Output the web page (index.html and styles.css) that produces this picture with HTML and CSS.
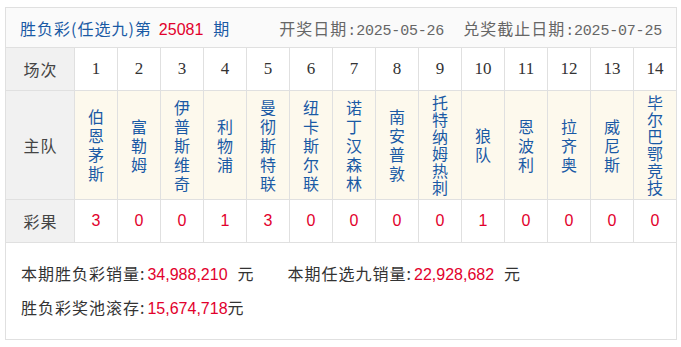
FILE: index.html
```html
<!DOCTYPE html>
<html lang="zh-CN">
<head>
<meta charset="utf-8">
<title>胜负彩(任选九)</title>
<link rel="stylesheet" href="styles.css">
</head>
<body>
<div class="panel">
  <div class="head">
    <div class="title">胜负彩(任选九)第<span class="issue">25081</span>期</div>
    <div class="dates">
      <span>开奖日期<span class="mono">:2025-05-26</span></span>
      <span>兑奖截止日期<span class="mono">:2025-07-25</span></span>
    </div>
  </div>
  <div class="grid">
    <div class="lab">场次</div>
    <div class="no">1</div><div class="no">2</div><div class="no">3</div><div class="no">4</div><div class="no">5</div><div class="no">6</div><div class="no">7</div><div class="no">8</div><div class="no">9</div><div class="no">10</div><div class="no">11</div><div class="no">12</div><div class="no">13</div><div class="no">14</div>
    <div class="lab">主队</div>
    <div class="team"><span>伯恩茅斯</span></div>
    <div class="team"><span>富勒姆</span></div>
    <div class="team"><span>伊普斯维奇</span></div>
    <div class="team"><span>利物浦</span></div>
    <div class="team"><span>曼彻斯特联</span></div>
    <div class="team"><span>纽卡斯尔联</span></div>
    <div class="team"><span>诺丁汉森林</span></div>
    <div class="team"><span>南安普敦</span></div>
    <div class="team"><span class="long">托特纳姆热刺</span></div>
    <div class="team"><span>狼队</span></div>
    <div class="team"><span>恩波利</span></div>
    <div class="team"><span>拉齐奥</span></div>
    <div class="team"><span>威尼斯</span></div>
    <div class="team"><span class="long">毕尔巴鄂竞技</span></div>
    <div class="lab">彩果</div>
    <div class="res">3</div><div class="res">0</div><div class="res">0</div><div class="res">1</div><div class="res">3</div><div class="res">0</div><div class="res">0</div><div class="res">0</div><div class="res">0</div><div class="res">1</div><div class="res">0</div><div class="res">0</div><div class="res">0</div><div class="res">0</div>
  </div>
  <div class="foot">
    <div class="line">
      <span class="item">本期胜负彩销量:<span class="num">34,988,210</span><span class="unit gap">元</span></span>
      <span class="item second">本期任选九销量:<span class="num">22,928,682</span><span class="unit gap">元</span></span>
    </div>
    <div class="line">
      <span class="item">胜负彩奖池滚存:<span class="num">15,674,718</span><span class="unit">元</span></span>
    </div>
  </div>
</div>
</body>
</html>
```
FILE: styles.css
```css
html, body {
  margin: 0;
  padding: 0;
  background: #fff;
}
body {
  font-family: "Noto Sans CJK SC", "Liberation Sans", sans-serif;
  color: #333;
}
.panel {
  width: 670px;
  margin: 7px 0 0 5px;
  border: 1px solid #e0e0e0;
}
.head {
  height: 39px;
  border-bottom: 1px solid #e0e0e0;
  background: #fafafa;
  display: flex;
  align-items: center;
  justify-content: space-between;
  padding: 0 14px 0 14px;
  font-size: 16px;
  letter-spacing: 1px;
}
.title {
  color: #1a5aa5;
}
.issue {
  font-family: "Liberation Sans", sans-serif;
  color: #e2002c;
  letter-spacing: 0;
  margin: 0 10px 0 7px;
}
.dates {
  color: #666;
  display: flex;
  gap: 19px;
}
.mono {
  font-family: "Liberation Mono", monospace;
  font-size: 15px;
  letter-spacing: -0.2px;
}
.grid {
  display: grid;
  grid-template-columns: 68px repeat(14, 42px);
  grid-template-rows: 42px 108px 42px;
  gap: 1px;
  background: #e0e0e0;
}
.grid > div {
  display: flex;
  align-items: center;
  justify-content: center;
}
.lab {
  background: #f1f1f1;
  color: #444;
  font-size: 16px;
  letter-spacing: 1px;
  padding-left: 1px;
}
.no {
  background: #fff;
  font-family: "Liberation Serif", serif;
  font-size: 17px;
  color: #333;
}
.team {
  background: #fdf9ed;
  overflow: hidden;
}
.team span {
  display: block;
  width: 16px;
  font-size: 16px;
  line-height: 19px;
  color: #1a5aa5;
  word-break: break-all;
  text-align: center;
}
.team span.long {
  line-height: 17px;
}
.res {
  background: #fff;
  font-family: "Liberation Sans", sans-serif;
  font-size: 16px;
  color: #e2002c;
}
.foot {
  border-top: 1px solid #e0e0e0;
  padding: 13px 14px 15px 15px;
  font-size: 16px;
  letter-spacing: 1px;
  color: #333;
}
.line {
  display: flex;
  line-height: 34px;
  height: 34px;
}
.num {
  font-family: "Liberation Sans", sans-serif;
  color: #e2002c;
  letter-spacing: 0;
  margin-left: 2px;
}
.unit.gap {
  margin-left: 10px;
}
.second {
  margin-left: 33px;
}
```
